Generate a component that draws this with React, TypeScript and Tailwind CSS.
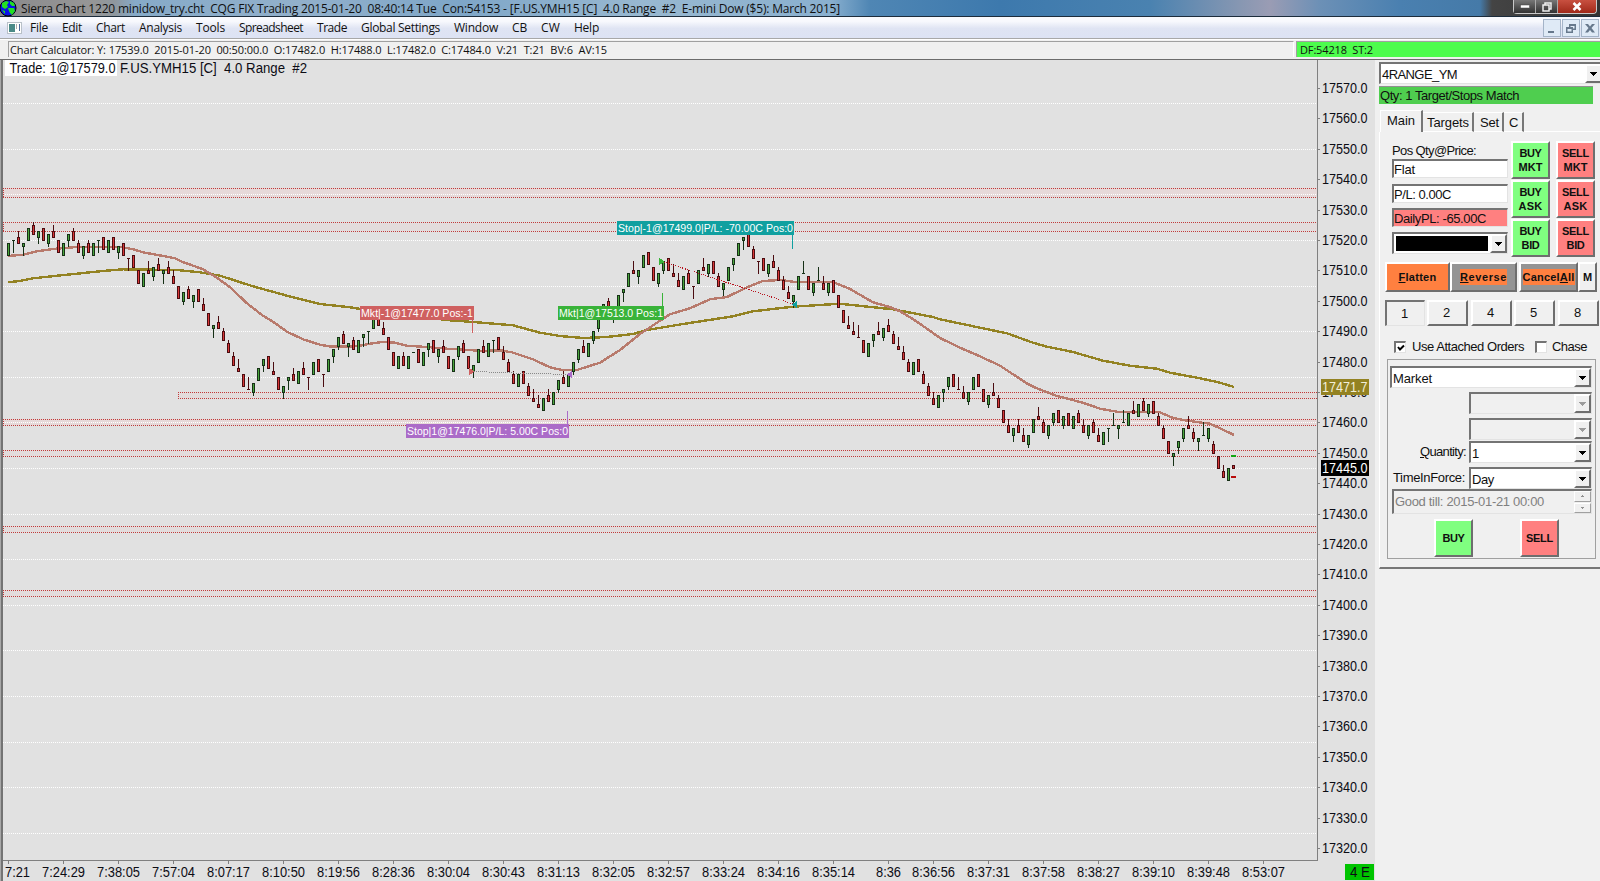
import React, { useLayoutEffect, useRef } from 'react';

// [kind, high, low, body high, body low], prices are offsets from 17000
type Candle = [string, number, number, number, number];

const RAW = `G519,515,519,515 G520,516,520,520 R523,519,521,519 G519,515,519,518 G524,520,524,520 R526,522,525,522 G523,519,523,521 R524,520,524,520
G522,518,522,519 R525,521,523,521 R520,516,520,516 G519,515,519,515 G522,518,522,520 R524,520,523,520 R520,516,519,516 G518,514,518,515
R520,516,519,516 G519,515,519,515 G520,516,520,520 R521,517,521,517 G520,516,520,516 R521,517,521,517 G518,514,518,516 R519,515,519,515
R514,510,514,514 R515,511,515,511 R510,506,510,506 G509,505,509,505 R513,509,510,509 G511,507,511,508 R514,510,512,510 G510,506,510,509
R513,509,511,509 R510,506,508,506 R505,501,505,501 G503,499,503,500 R505,501,504,501 G502,498,502,500 R504,500,504,500 R501,497,499,497
R496,492,496,492 G492,488,492,491 R495,491,493,491 R491,487,490,487 R487,483,486,483 R483,479,482,479 R481,477,478,477 R476,472,476,472
R475,471,471,471 G473,469,473,470 G478,474,478,474 G481,477,481,479 R482,478,482,478 R480,476,477,476 R475,471,475,471 G472,468,472,470
G475,471,475,474 R478,474,476,474 G477,473,477,473 R480,476,478,476 R475,471,475,475 G480,476,480,476 R481,477,481,477 R476,472,476,476
G481,477,481,477 G484,480,484,482 G488,484,488,485 R490,486,489,486 G486,482,486,485 R488,484,487,484 G487,483,487,483 G489,485,489,488
G490,486,490,490 G495,491,495,491 R496,492,495,492 R493,489,491,489 R488,484,488,484 R483,479,483,479 G482,478,482,478 R483,479,482,479
G482,478,482,478 G483,483,483,483 R484,480,484,480 G483,479,483,479 G486,482,486,484 R487,483,487,483 G484,480,484,482 R487,483,485,483
R482,478,482,478 G481,477,481,477 G485,481,485,482 R487,483,486,483 R482,478,482,478 G479,475,479,477 G484,480,484,480 R487,483,485,483
G486,482,486,482 G487,483,487,487 R488,484,488,484 R485,481,483,481 R481,477,480,477 R477,473,476,473 G476,472,476,472 R477,473,477,473
R473,469,472,469 R471,467,468,467 R469,465,466,465 G468,464,468,464 R471,467,469,467 G470,466,470,466 G474,470,474,471 R477,473,475,473
G476,472,476,472 G480,476,480,477 G484,480,484,481 R487,483,485,483 G486,482,486,482 G490,486,490,487 G494,490,494,491 G499,495,499,495
R501,497,500,497 G497,493,497,494 G502,498,502,498 G504,500,504,503 G509,505,509,505 R513,509,510,509 G510,506,510,508 G515,511,515,511
R516,512,516,512 R511,507,511,507 G509,505,509,506 G513,509,513,510 R514,510,514,510 R512,508,509,508 R509,505,507,505 G508,504,508,504
R510,506,509,506 R505,501,505,505 G510,506,510,506 R514,510,511,510 G512,508,512,509 R513,509,513,509 R509,505,508,505 G506,502,506,504
G511,507,511,507 G514,510,514,512 G519,515,519,515 G521,517,521,520 R522,518,522,518 R518,514,517,514 R513,509,513,513 R514,510,514,510
G512,508,512,509 R515,511,513,511 R511,507,510,507 R508,504,507,504 R505,501,503,501 G502,498,502,500 G508,504,508,504 G513,509,509,509
R508,504,508,504 G506,502,506,503 G511,507,507,507 R508,504,506,504 G506,502,506,503 R507,503,507,503 R502,498,502,498 R497,493,497,493
R495,491,492,491 R493,489,490,489 R492,488,488,488 R487,483,487,483 G486,482,486,482 G489,485,489,487 R493,489,490,489 G491,487,491,488
R494,490,492,490 R490,486,489,486 R488,484,485,484 R485,481,483,481 R481,477,480,477 G480,476,480,476 R481,477,481,477 R477,473,476,473
R473,469,472,469 R470,466,468,466 G469,465,469,465 G471,467,471,470 G475,471,475,472 R476,472,476,472 R475,471,471,471 R472,468,470,468
G470,466,470,467 G475,471,475,471 R476,472,476,472 R471,467,471,467 G469,465,469,466 R473,469,470,469 R469,465,468,465 R464,460,464,460
R461,457,459,457 G458,454,458,456 R461,457,459,457 R458,454,456,454 G456,452,456,453 G461,457,461,457 R465,461,462,461 R461,457,460,457
G459,455,459,456 G463,459,463,460 R464,460,464,460 G462,458,462,459 R463,459,463,459 G462,458,462,458 R464,460,463,460 R461,457,459,457
G459,455,459,456 R461,457,460,457 R458,454,456,454 G457,453,457,453 G458,454,458,458 G463,459,459,459 G459,455,459,458 G464,460,460,460
G463,459,463,459 R467,463,464,463 G466,462,466,462 R468,464,467,464 G466,462,466,463 R467,463,467,463 R463,459,462,459 R459,455,458,455
R454,450,454,450 G450,446,450,449 G454,450,454,452 G458,454,458,455 R462,458,459,458 R458,454,457,455 G455,451,455,454 G460,456,456,456
G458,454,458,455 R454,450,453,450 R449,445,449,445 R446,442,444,442 G445,441,445,441 R446,445,446,445`;

const candles: Candle[] = RAW.split(/\s+/).map((s) => {
    const n = s.slice(1).split(',').map(Number);
    return [s[0], n[0], n[1], n[2], n[3]];
});

const FAST =
    '8,256 23,254.7 37,251.3 53,249 77,247 123,247.3 133,249.3 143,252.3 167,256.7 175,258.3 182,261.7 203,269.3 217,277.7 230,287.3 247,303.3 262,315 273,321.7 287,331.7 303,339.3 320,344.7 330,346.5 357,346.3 370,343.7 382,342 395,342.7 407,345.7 427,347 447,348.7 470,350 480,351 500,350.3 512,352.3 533,359.3 550,367.3 563,370.3 577,370 600,362.7 620,350 640,334 657,322.7 670,314.3 690,308.3 710,299.3 727,297 747,287.3 763,281 780,280 793,281.7 833,282 850,289 873,302.3 890,307 900,311.3 913,319 927,328.7 940,338 960,347.7 980,356.3 1000,365.7 1027,383.5 1036,388 1057,396 1083,402.7 1100,408.7 1117,411.7 1160,412.3 1173,418 1187,420.7 1210,423.7 1223,429.7 1234,435';
const SLOW =
    '8,282.3 20,281 33,278.3 67,274.7 103,271 123,269.3 177,270 200,272.3 220,275.7 253,286.3 287,295.7 320,304 350,307.3 400,315 450,320.3 473,322 513,325.3 540,332.7 560,336 583,338 607,337 633,334 647,330 683,324 733,316.3 753,311.3 793,306.7 840,303.7 847,304.5 893,309.3 933,317 940,319.3 983,328.3 1007,333.3 1033,342.7 1047,346.7 1073,352 1103,360.7 1130,365.7 1157,368.7 1170,372.7 1200,378.3 1220,382.7 1234,387';

const yOf = (p: number) => Math.floor(88.5 + (570 - p) * 3.04);

const TIMES: [number, string][] = [
    [63, '7:24:29'], [118, '7:38:05'], [173, '7:57:04'], [228, '8:07:17'], [283, '8:10:50'], [338, '8:19:56'],
    [393, '8:28:36'], [448, '8:30:04'], [503, '8:30:43'], [558, '8:31:13'], [613, '8:32:05'], [668, '8:32:57'],
    [723, '8:33:24'], [778, '8:34:16'], [833, '8:35:14'], [888, '8:36'], [933, '8:36:56'], [988, '8:37:31'],
    [1043, '8:37:58'], [1098, '8:38:27'], [1153, '8:39:10'], [1208, '8:39:48'], [1263, '8:53:07'],
];

const BANDS = [[537, 534, 3], [526, 523, 3], [470, 468, 178], [461, 459, 3], [451, 449, 3], [426, 424, 3], [405, 403, 3]];

const FILLS = [
    { x: 360, y: 306, w: 114, color: '#cf6060', text: 'Mkt|-1@17477.0 Pos:-1', lx: 472.5, y1: 320, y2: 333 },
    { x: 406, y: 424, w: 163, color: '#ab6bc8', text: 'Stop|1@17476.0|P/L: 5.00C Pos:0', lx: 567.5, y1: 411, y2: 424 },
    { x: 558, y: 306, w: 106, color: '#39b339', text: 'Mkt|1@17513.0 Pos:1', lx: 662.5, y1: 293, y2: 306 },
    { x: 617, y: 221, w: 177, color: '#10a0a0', text: 'Stop|-1@17499.0|P/L: -70.00C Pos:0', lx: 792.5, y1: 235, y2: 249 },
];

// Text squeezed to a given width by letter spacing
const Fit: React.FC<{ w: number; className?: string; children: React.ReactNode }> = ({ w, className = '', children }) => {
    const ref = useRef<HTMLSpanElement>(null);
    useLayoutEffect(() => {
        const el = ref.current;
        if (!el) return;
        el.style.letterSpacing = '0px';
        const n = (el.textContent || '').length;
        el.style.letterSpacing = `${(w - el.getBoundingClientRect().width) / n}px`;
    }, [w]);
    return (
        <span ref={ref} className={`inline-block whitespace-pre ${className}`}>
            {children}
        </span>
    );
};

const Bar = ({ c, i }: { c: Candle; i: number }) => {
    const [kind, high, low, top, bottom] = c;
    const x = 8 + i * 5;
    const dark = kind === 'G' ? '#163016' : '#4a0c10';
    const fill = kind === 'G' ? '#4aa53c' : '#d83838';
    const yt = yOf(top);
    const yb = yOf(bottom);
    return (
        <g>
            {high > low && <rect x={x} y={yOf(high)} width={1} height={yOf(low) - yOf(high) + 1} fill={dark} />}
            <rect x={x - 1} y={yt} width={3} height={yb - yt + 1} fill={dark} />
            {yb - yt > 1 && <rect x={x} y={yt + 1} width={1} height={yb - yt - 1} fill={fill} />}
        </g>
    );
};

const Chart = () => (
    <svg width={1375} height={822} viewBox="0 59 1375 822" className="block shrink-0" fontFamily="'Liberation Sans', Arial, sans-serif">
        <rect x={0} y={59} width={1375} height={822} fill="#e1e1e1" />
        <g shapeRendering="crispEdges">
            <rect x={0} y={59} width={1} height={822} fill="#a8a8a8" />
            <rect x={1} y={59} width={2} height={822} fill="#747474" />
            <rect x={0} y={59} width={1375} height={1} fill="#6c6c6c" />
            {BANDS.map(([a, b, x]) => (
                <rect key={a} x={x} y={yOf(a)} width={1317 - x} height={yOf(b) - yOf(a)} fill={b === 534 || b === 459 ? '#e6d9d9' : '#e3dcdc'} />
            ))}
            {Array.from({ length: 17 }, (_, k) => yOf(565 - k * 15) + 0.5).map((y) => (
                <line key={y} x1={3} x2={1317} y1={y} y2={y} stroke="#fff" strokeDasharray="1 1" />
            ))}
            {BANDS.map(([a, b, x]) => (
                <path
                    key={a}
                    d={`M${x} ${yOf(a) + 0.5}H1317M${x} ${yOf(b) + 0.5}H1317M${x + 0.5} ${yOf(a)}V${yOf(b)}`}
                    stroke="#c03a3a"
                    strokeDasharray="1 1"
                    fill="none"
                />
            ))}
            <polyline points={SLOW} fill="none" stroke="#938222" strokeWidth={2.4} />
            <polyline points={FAST} fill="none" stroke="#b87a6c" strokeWidth={2.4} />
            {candles.map((c, i) => (
                <Bar key={i} c={c} i={i} />
            ))}
            <rect x={1231} y={455} width={5} height={2} fill="#12a512" />
            <rect x={1231} y={476} width={5} height={2} fill="#b80c0c" />
            <path d="M474 371.5H488M489 372.5H515M516 373.5H552M553 374.5H568" stroke="#888" strokeDasharray="1 1" fill="none" />
            <line x1={664} y1={262} x2={793} y2={304} stroke="#b81420" strokeDasharray="1.2 1.2" />
            <path d="M469 367.5V375.5L474 371.5Z" fill="#cf6060" />
            <path d="M572 370.5V378.5L567 374.5Z" fill="#ab6bc8" />
            <path d="M659 257.5V265.5L664 261.5Z" fill="#39b339" />
            <path d="M797 300.5V308.5L792 304.5Z" fill="#10a0a0" />
            {FILLS.map((f) => (
                <g key={f.text}>
                    <line x1={f.lx} x2={f.lx} y1={f.y1} y2={f.y2} stroke={f.color} />
                    <rect x={f.x} y={f.y} width={f.w} height={14} fill={f.color} />
                </g>
            ))}
            <path d="M1317.5 60V860.5H3" stroke="#808080" fill="none" />
            {Array.from({ length: 26 }, (_, k) => yOf(570 - k * 10)).map((y) => (
                <rect key={y} x={1318} y={y} width={2} height={1} fill="#808080" />
            ))}
            <rect x={8} y={861} width={1} height={3} fill="#808080" />
            {TIMES.map(([x]) => (
                <rect key={x} x={x} y={861} width={1} height={3} fill="#808080" />
            ))}
        </g>
        {FILLS.map((f) => (
            <text key={f.text} x={f.x + 1} y={f.y + 11} fontSize={11} fill="#fff" textLength={f.w - 2} lengthAdjust="spacingAndGlyphs">
                {f.text}
            </text>
        ))}
        <g fontSize={14} fill="#0c0c14">
            {Array.from({ length: 26 }, (_, k) => 17570 - k * 10).map((p) => (
                <text key={p} x={1322} y={yOf(p - 17000) + 5} textLength={45.5} lengthAdjust="spacingAndGlyphs">
                    {`${p}.0`}
                </text>
            ))}
            <text x={5} y={877} textLength={25} lengthAdjust="spacingAndGlyphs">7:21</text>
            {TIMES.map(([x, t]) => (
                <text key={x} x={x + 0.5} y={877} textAnchor="middle" textLength={t.length > 5 ? 43 : 25} lengthAdjust="spacingAndGlyphs">
                    {t}
                </text>
            ))}
            <rect x={1321} y={379} width={48} height={16} fill="#938222" />
            <text x={1322} y={392} fill="#f2eed8" textLength={45.5} lengthAdjust="spacingAndGlyphs">17471.7</text>
            <rect x={1321} y={460} width={48} height={16} fill="#000" />
            <text x={1322} y={473} fill="#fff" textLength={45.5} lengthAdjust="spacingAndGlyphs">17445.0</text>
            <rect x={1345} y={864} width={29} height={16} fill="#00c400" />
            <text x={1350} y={877} textLength={20} lengthAdjust="spacingAndGlyphs">4 E</text>
            <rect x={5} y={60} width={112} height={16} fill="#fff" />
            <text x={9.5} y={73} textLength={106} lengthAdjust="spacingAndGlyphs">Trade: 1@17579.0</text>
            <text x={120} y={73} textLength={187} lengthAdjust="spacingAndGlyphs" className="whitespace-pre">{'F.US.YMH15 [C]  4.0 Range  #2'}</text>
        </g>
    </svg>
);

const SUNK = 'border border-t-2 border-l-2 border-t-[#747474] border-l-[#747474] border-r-[#e3e3e3] border-b-[#e3e3e3]';
const RAISED = 'border-2 border-t-white border-l-white border-r-[#6e6e6e] border-b-[#6e6e6e]';

const Arrow = ({ off = false }: { off?: boolean }) => (
    <span className={`flex w-[17px] shrink-0 items-center justify-center bg-[#f0f0f0] ${RAISED}`}>
        <svg width={7} height={4} viewBox="0 0 7 4" shapeRendering="crispEdges">
            <path d="M0 0H7V1H6V2H5V3H4V4H3V3H2V2H1V1H0Z" fill={off ? '#9c9c9c' : '#000'} />
        </svg>
    </span>
);

const Combo = ({ text, w, off = false, className = '' }: { text: string; w: number; off?: boolean; className?: string }) => (
    <div className={`flex h-[22px] justify-between ${SUNK} ${off ? 'bg-[#f0f0f0]' : 'bg-white'} ${className}`}>
        <span className="pt-[1px] pl-[1px] leading-[19px]">{text && <Fit w={w}>{text}</Fit>}</span>
        <Arrow off={off} />
    </div>
);

const OrderButton = ({ a, b, buy }: { a: string; b: string; buy: boolean }) => (
    <button className={`h-[38px] w-[39px] text-[11px] leading-[14px] font-bold ${RAISED} ${buy ? 'bg-[#80ff80]' : 'bg-[#ff8080]'}`}>
        <Fit w={a === 'BUY' ? 22 : 27}>{a}</Fit>
        {b && (
            <>
                <br />
                <Fit w={b === 'BID' ? 18 : 24}>{b}</Fit>
            </>
        )}
    </button>
);

const QTYS: [string, string][] = [['1', 'w-[40px] pr-[2px]'], ['2', 'ml-[2px] w-[41px] pr-[2px]'], ['4', 'ml-[3px] w-[41px] pr-[2px]'], ['5', 'ml-[2px] w-[41px] pr-[2px]'], ['8', 'ml-[3px] w-[41px] pr-[2px]']];

const TradePanel = () => (
    <aside className="h-[822px] w-[225px] overflow-hidden border-t border-t-[#6c6c6c] bg-[#f0f0f0] pt-[2px] pl-[4px] text-[13px] text-[#101010]">
        <Combo text="4RANGE_YM" w={75} className="w-[224px]" />
        <div className="mt-[2px] h-[18px] w-[214px] border-t border-[#909090] bg-[#4fce4f] leading-[18px]">
            <Fit w={140} className="pl-px">Qty: 1 Target/Stops Match</Fit>
        </div>

        <div className="ml-px mt-[6px] flex h-[22px] items-end leading-none">
            <div className="h-[22px] w-[43px] border-t border-l border-r-2 border-t-white border-l-white border-r-[#777] pt-[3px] pl-[6px]"><Fit w={28}>Main</Fit></div>
            <div className="h-[20px] w-[51px] border-t border-r-2 border-b border-t-white border-r-[#777] border-b-white pt-[3px] pl-[4px]"><Fit w={42}>Targets</Fit></div>
            <div className="h-[20px] w-[30px] border-t border-r-2 border-b border-t-white border-r-[#777] border-b-white pt-[3px] pl-[6px]"><Fit w={19}>Set</Fit></div>
            <div className="h-[20px] w-[20px] border-t border-r-2 border-b border-t-white border-r-[#777] border-b-white pt-[3px] pl-[5px]"><Fit w={9}>C</Fit></div>
            <div className="flex-1 border-b border-white" />
        </div>

        <div className="h-[437px] w-[221px] border-b-2 border-l border-b-[#777] border-l-white pl-[5px]">
            <div className="flex pt-[9px]">
                <div className="ml-[7px] w-[116px]">
                    <div className="h-[18px] pt-[3px] leading-[13px]"><Fit w={84}>Pos Qty@Price:</Fit></div>
                    <div className={`h-[19px] bg-white leading-[18px] ${SUNK}`}><Fit w={21}>Flat</Fit></div>
                    <div className={`mt-[6px] h-[19px] bg-white leading-[18px] ${SUNK}`}><Fit w={57}>P/L: 0.00C</Fit></div>
                    <div className={`mt-[5px] h-[19px] bg-[#ff8080] leading-[18px] ${SUNK}`}><Fit w={92}>DailyPL: -65.00C</Fit></div>
                    <div className={`mt-[5px] flex h-[22px] bg-white ${SUNK}`}>
                        <div className="m-[2px] flex-1 bg-black" />
                        <Arrow />
                    </div>
                </div>
                <div className="ml-[3px] flex flex-col gap-px">
                    <OrderButton a="BUY" b="MKT" buy />
                    <OrderButton a="BUY" b="ASK" buy />
                    <OrderButton a="BUY" b="BID" buy />
                </div>
                <div className="ml-[6px] flex flex-col gap-px">
                    <OrderButton a="SELL" b="MKT" buy={false} />
                    <OrderButton a="SELL" b="ASK" buy={false} />
                    <OrderButton a="SELL" b="BID" buy={false} />
                </div>
            </div>

            <div className="mt-[5px] flex h-[30px] text-[11px] font-bold">
                <button className={`w-[65px] bg-[#ff8040] ${RAISED}`}><Fit w={38}><u>F</u>latten</Fit></button>
                <button className={`w-[67px] bg-[#949494] ${RAISED}`}><Fit w={47} className="bg-[#ff8040]"><u>R</u>everse</Fit></button>
                <button className={`ml-[2px] w-[59px] bg-[#949494] ${RAISED}`}><Fit w={52} className="bg-[#ff8040]">Cancel<u>A</u>ll</Fit></button>
                <button className={`w-[19px] bg-[#f0f0f0] ${RAISED}`}>M</button>
            </div>

            <div className="mt-[8px] flex h-[26px] text-[13px]">
                {QTYS.map(([q, cls]) => (
                    <button key={q} className={`${cls} ${q === '1' ? SUNK : RAISED}`}>{q}</button>
                ))}
            </div>

            <div className="mt-[13px] flex h-[16px] items-center">
                <span className={`ml-[9px] flex h-[12px] w-[12px] items-center justify-center bg-white ${SUNK}`}>
                    <svg width={8} height={8} viewBox="0 0 8 8"><path d="M1 3L3 5.5L7 1.5" stroke="#000" strokeWidth={2} fill="none" /></svg>
                </span>
                <Fit w={112} className="ml-[6px]">Use Attached Orders</Fit>
                <span className={`ml-[11px] h-[12px] w-[12px] bg-white ${SUNK}`} />
                <Fit w={35} className="ml-[5px]">Chase</Fit>
            </div>

            <div className="mt-[4px] ml-[2px] h-[200px] w-[209px] border border-[#a0a0a0] pt-[6px] pr-[3px] pl-[2px]">
                <Combo text="Market" w={39} />
                <Combo text="" w={0} off className="mt-[4px] ml-[79px]" />
                <Combo text="" w={0} off className="mt-[4px] ml-[79px]" />
                <div className="mt-px flex">
                    <div className="w-[79px] pr-[3px] pt-[2px] text-right leading-[18px]"><Fit w={46}><u>Q</u>uantity:</Fit></div>
                    <Combo text="1" w={6} className="flex-1" />
                </div>
                <div className="mt-[4px] flex">
                    <div className="w-[79px] pr-[4px] pt-[2px] text-right leading-[18px]"><Fit w={72}>TimeInForce:</Fit></div>
                    <Combo text="Day" w={22} className="flex-1" />
                </div>
                <div className={`ml-[2px] flex h-[25px] justify-between leading-[21px] text-[#808080] ${SUNK}`}>
                    <Fit w={150} className="pl-px">Good till: 2015-01-21 00:00</Fit>
                    <div className="flex w-[17px] flex-col gap-px">
                        {['M0 2H3V1H2V0H1V1H0Z', 'M0 0H3V1H2V2H1V1H0Z'].map((d) => (
                            <span key={d} className="flex flex-1 items-center justify-center border border-t-white border-l-white border-r-[#a0a0a0] border-b-[#a0a0a0]">
                                <svg width={3} height={2} shapeRendering="crispEdges"><path d={d} fill="#909090" /></svg>
                            </span>
                        ))}
                    </div>
                </div>
                <div className="mt-[5px] ml-[44px] flex gap-[47px]">
                    <OrderButton a="BUY" b="" buy />
                    <OrderButton a="SELL" b="" buy={false} />
                </div>
            </div>
        </div>
    </aside>
);

// label, slot width, text width
const MENU: [string, number, number][] = [
    ['File', 32, 18], ['Edit', 34, 20], ['Chart', 43, 29], ['Analysis', 57, 43], ['Tools', 43, 29], ['Spreadsheet', 78, 64],
    ['Trade', 44, 30], ['Global Settings', 93, 79], ['Window', 58, 44], ['CB', 29, 15], ['CW', 33, 19], ['Help', 40, 25],
];

const CHILD_ICONS = ['M2 9H8V11H2Z', 'M4 2H11V8H8V11H1V5H4ZM5.5 4V5H8V6.500H9.500V4ZM2.500 7V9.500H6.500V7Z', 'M1 2H4L6 4.500L8 2H11L7.500 6L11 10.500H8L6 8L4 10.500H1L4.500 6Z'];

export default function App() {
    return (
        <div className="flex h-[881px] w-[1600px] flex-col overflow-hidden bg-[#f0f0f0] font-['Liberation_Sans',Arial,sans-serif] text-[#101010]">
            <header className="flex h-[17px] shrink-0 items-start justify-between border-b border-[#1c2c3c] bg-[linear-gradient(90deg,#8a8a8c_0px,#969696_90px,#8f979e_115px,#86aac8_135px,#92b0cb_300px,#7ea6c8_460px,#98b8d0_640px,#8ab0cf_830px,#4f86b4_870px,#3d79ad_1000px,#4a82b0_1150px,#8797b2_1240px,#9a9cb4_1270px,#6c90b6_1320px,#4a80b0_1400px,#457aa8_1480px,#444_1492px,#333_1600px)]">
                <div className="flex items-start">
                    <svg width={17} height={17} viewBox="0 0 17 17">
                        <circle cx={8} cy={8} r={8} fill="#0a14e8" stroke="#000" />
                        <path d="M2 3L6 1L9 2L7 5L8 7L5 9L2 7ZM10 1L14 3L15 6L12 6L10 4ZM8 8L14 8L15 11L12 15L10 13L9 11ZM2 10L5 11L5 14Z" fill="#22e022" />
                    </svg>
                    <Fit w={819} className="ml-[4px] h-[17px] font-['Open_Sans','Noto_Sans',sans-serif] text-[12px] leading-[18px]">
                        {'Sierra Chart 1220 minidow_try.cht  CQG FIX Trading 2015-01-20  08:40:14 Tue  Con:54153 - [F.US.YMH15 [C]  4.0 Range  #2  E-mini Dow ($5): March 2015]'}
                    </Fit>
                </div>
                <div className="mr-[3px] flex h-[14px] rounded-b-[4px] border border-t-0 border-[#c8c8c8] bg-[#555]">
                    <span className="flex w-[22px] items-center justify-center border-r border-[#aaa] bg-linear-to-b from-[#777] to-[#333]">
                        <svg width={10} height={5}><rect x={0.5} y={1} width={9} height={3} fill="#fff" stroke="#444" strokeWidth={0.5} /></svg>
                    </span>
                    <span className="flex w-[22px] items-center justify-center border-r border-[#aaa] bg-linear-to-b from-[#777] to-[#333]">
                        <svg width={10} height={10} fill="none" stroke="#eee" strokeWidth={1.5}><path d="M3 3V1H9V7H7" /><rect x={1} y={3} width={6} height={6} /></svg>
                    </span>
                    <span className="flex w-[38px] items-center justify-center rounded-br-[3px] bg-linear-to-b from-[#c85040] to-[#a02818]">
                        <svg width={10} height={9}><path d="M1.500 1L8.500 8M8.500 1L1.500 8" stroke="#fff" strokeWidth={2.500} /></svg>
                    </span>
                </div>
            </header>

            <nav className="flex h-[22px] shrink-0 items-center justify-between border-b border-[#a8a8a8] bg-linear-to-b from-[#f8f9fd] from-20% via-[#dfe4f3] via-55% to-[#dde3f4]">
                <div className="flex items-center font-['Open_Sans','Noto_Sans',sans-serif] text-[12px] leading-[20px]">
                    <svg width={15} height={12} className="mr-[8px] ml-[7px]">
                        <rect x={0.5} y={0.5} width={14} height={11} fill="#fff" stroke="#b8c0c8" />
                        <rect x={2} y={2} width={6} height={8} fill="#4a8a88" />
                        <rect x={9} y={2} width={1} height={5} fill="#aaa" />
                        <rect x={12} y={2} width={1} height={7} fill="#4a6a9a" />
                    </svg>
                    {MENU.map(([label, slot, w]) => (
                        <div key={label} style={{ width: slot }}>
                            <Fit w={w}>{label}</Fit>
                        </div>
                    ))}
                </div>
                <div className="flex gap-[1px] pr-px">
                    {CHILD_ICONS.map((d) => (
                        <span key={d} className="flex h-[18px] w-[18px] items-center justify-center border border-[#a4b4c8] bg-[#dfeaf6]">
                            <svg width={12} height={12}><path d={d} fill="#66788c" fillRule="evenodd" /></svg>
                        </span>
                    ))}
                </div>
            </nav>

            <div className="flex h-[20px] shrink-0 items-end border-t border-white pb-[2px] font-['Open_Sans','Noto_Sans',sans-serif] text-[11px] leading-[15px]">
                <div className="ml-[8px] h-[16px] w-[1286px] border-t border-l border-r border-t-[#a0a0a0] border-l-[#a0a0a0] border-r-white pl-px">
                    <Fit w={597}>{'Chart Calculator: Y: 17539.0  2015-01-20  00:50:00.0  O:17482.0  H:17488.0  L:17482.0  C:17484.0  V:21  T:21  BV:6  AV:15'}</Fit>
                </div>
                <div className="ml-[2px] h-[16px] flex-1 border-t border-l border-[#a0a0a0] bg-[#4dfc4d] pl-[3px]">
                    <Fit w={73}>{'DF:54218  ST:2'}</Fit>
                </div>
            </div>

            <main className="flex">
                <Chart />
                <TradePanel />
            </main>
        </div>
    );
}
